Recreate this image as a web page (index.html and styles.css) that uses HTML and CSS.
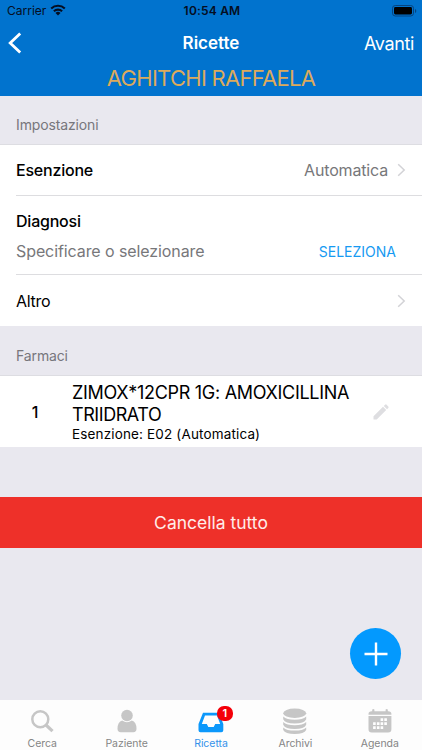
FILE: index.html
```html
<!DOCTYPE html>
<html lang="it">
<head>
<meta charset="utf-8">
<title>Ricette</title>
<link rel="stylesheet" href="styles.css">
</head>
<body>
<div class="app">
  <header class="header">
    <div class="status">
      <div class="carrier"><span>Carrier</span>
        <svg width="16" height="12" viewBox="0 0 16 12"><g fill="none" stroke="#050e22" stroke-width="2.1"><path d="M1.2 4.6a9.7 9.7 0 0 1 13.6 0"/><path d="M3.9 7.3a5.9 5.9 0 0 1 8.2 0"/></g><path d="M5.5 9a3.6 3.6 0 0 1 5 0L8 11.5z" fill="#050e22"/></svg>
      </div>
      <time class="time">10:54 AM</time>
      <svg class="battery" width="25" height="12" viewBox="0 0 25 12"><rect x=".5" y=".5" width="21" height="10.5" rx="2.8" fill="none" stroke="#06447f"/><rect x="2" y="2" width="18" height="7.5" rx="1.4" fill="#000"/><path d="M23 4v4q1.3-.6 1.3-2T23 4" fill="#06447f"/></svg>
    </div>
    <nav class="nav">
      <svg class="back" width="14" height="24" viewBox="0 0 14 24"><path d="M12.2 2.5 2.2 12l10 9.5" fill="none" stroke="#fff" stroke-width="2.8"/></svg>
      <h1 class="title">Ricette</h1>
      <span class="next">Avanti</span>
    </nav>
    <div class="patient"><span>AGHITCHI RAFFAELA</span></div>
  </header>
  <main class="content">
    <h2 class="section"><span>Impostazioni</span></h2>
    <div class="list">
      <div class="row first">
        <span class="label">Esenzione</span>
        <span class="value">Automatica</span>
        <svg class="chevron" width="9" height="14" viewBox="0 0 9 14"><path d="m1.2 1.2 6 5.8-6 5.8" fill="none" stroke="#d2d2d6" stroke-width="1.5"/></svg>
      </div>
      <div class="row diagnosis">
        <span class="label">Diagnosi</span>
        <div class="pick"><span class="hint">Specificare o selezionare</span><span class="select">SELEZIONA</span></div>
      </div>
      <div class="row last">
        <span class="altro">Altro</span>
        <svg class="chevron" width="9" height="14" viewBox="0 0 9 14"><path d="m1.2 1.2 6 5.8-6 5.8" fill="none" stroke="#d2d2d6" stroke-width="1.5"/></svg>
      </div>
    </div>
    <h2 class="section second"><span>Farmaci</span></h2>
    <div class="drug">
      <span class="number">1</span>
      <div class="drug-text">
        <div class="name"><span>ZIMOX*12CPR 1G: AMOXICILLINA</span><br><span class="name-end">TRIIDRATO</span></div>
        <div class="detail"><span>Esenzione: E02 (Automatica)</span></div>
      </div>
      <svg class="pencil" width="16" height="16" viewBox="0 0 16 16"><path d="M.5 12.3 10 2.8 13.2 6l-9.5 9.5H.5zM10.8 2l1.3-1.3q.8-.7 1.5 0l1.7 1.7q.7.7 0 1.5L14 5.2z" fill="#dedee1"/></svg>
    </div>
    <div class="cancel"><span>Cancella tutto</span></div>
    <div class="fab"><svg width="24" height="24" viewBox="0 0 24 24"><path d="M12 .5v23M.5 12h23" stroke="#fff" stroke-width="2.4"/></svg></div>
  </main>
  <footer class="tabs">
    <div class="tab"><svg width="30" height="28" viewBox="0 0 30 28"><circle cx="13.3" cy="12.3" r="8" fill="none" stroke="#c6c6c6" stroke-width="2.5"/><path d="m19 18 6.5 6.2" stroke="#c6c6c6" stroke-width="3.2"/></svg><span>Cerca</span></div>
    <div class="tab"><svg width="30" height="28" viewBox="0 0 30 28"><circle cx="15" cy="8.5" r="5.8" fill="#c6c6c6"/><path d="M10.2 13.6q4.8 3.2 9.6 0 4.7 1.5 4.7 8.2 0 3.4-3.2 3.4H8.7q-3.2 0-3.2-3.4 0-6.7 4.7-8.2" fill="#c6c6c6"/></svg><span>Paziente</span></div>
    <div class="tab active"><svg width="30" height="28" viewBox="0 0 30 28"><path d="M7 5.7h16l4.3 11.2v6.4q0 2-2 2H4.5q-2 0-2-2v-6.4zM9 8.4 5.8 17h5l1.5 3h5.4l1.5-3h5L21 8.4z" fill="#0c98fb" fill-rule="evenodd"/></svg><b class="badge">1</b><span>Ricetta</span></div>
    <div class="tab"><svg width="30" height="28" viewBox="0 0 30 28"><g fill="#c6c6c6"><ellipse cx="14.7" cy="6.3" rx="11.5" ry="4.7"/><path d="M3.2 9.5q3.5 3.3 11.5 3.3t11.5-3.3v2.7q-2 4.4-11.5 4.4T3.2 12.2zM3.2 15q3.5 3.3 11.5 3.3T26.2 15v2.7q-2 4.3-11.5 4.3T3.2 17.7zM3.2 20.4q3.5 3.2 11.5 3.2t11.5-3.2V23q-2 4-11.5 4T3.2 23z"/></g></svg><span>Archivi</span></div>
    <div class="tab"><svg width="30" height="28" viewBox="0 0 30 28"><path d="M7.2 2.5q1.2-1 2.2 0v1.7h11.2V2.5q1-1 2.2 0v1.7Q26.4 4 26.4 7v.7H3.5V7q0-3 3.7-2.8zM3.5 9h22.9v13.2q0 3.3-3.3 3.3H6.8q-3.3 0-3.3-3.3z" fill="#c6c6c6"/><path d="M15.6 11.3h2.6v2.6h-2.6zm3.7 0h2.6v2.6h-2.6zM8.1 15.3h2.6v2.6H8.1zm3.8 0h2.6v2.6h-2.6zm3.7 0h2.6v2.6h-2.6zm3.7 0h2.6v2.6h-2.6zM8.1 19.3h2.6v2.6H8.1zm3.8 0h2.6v2.6h-2.6zm3.7 0h2.6v2.6h-2.6z" fill="#fff"/></svg><span>Agenda</span></div>
  </footer>
</div>
</body>
</html>
```
FILE: styles.css
```css
* { box-sizing: border-box; }
body { margin: 0; font-family: Inter, "Liberation Sans", sans-serif; color: #000; }
svg { display: block; flex: none; }
span, time { white-space: nowrap; }
.app { width: 422px; height: 750px; display: flex; flex-direction: column; background: #e9e8ef; overflow: hidden; }

.header { height: 96px; flex: none; background: #0173ce; color: #fff; }
.status { height: 22px; display: grid; grid-template-columns: 1fr auto 1fr; align-items: center; padding: 0 5px 0 7px; color: #050e22; font-size: 12px; line-height: 22px; }
.carrier { display: flex; align-items: center; gap: 4px; }
.carrier svg { margin-top: -2px; }
.time { font-weight: 600; letter-spacing: .2px; }
.battery { justify-self: end; }
.nav { height: 42px; display: grid; grid-template-columns: 1fr auto 1fr; align-items: center; padding: 0 8px; }
.title { margin: 0; font-size: 17px; line-height: 42px; font-weight: 600; }
.next { justify-self: end; font-size: 18px; letter-spacing: -.35px; }
.patient { height: 28px; text-align: center; color: #dcaa5c; font-size: 22px; line-height: 28px; letter-spacing: -.72px; }

.content { height: 604px; flex: none; position: relative; }
.section { height: 49px; margin: 0; padding: 19px 16px 0; font-size: 14px; line-height: 20px; font-weight: 400; letter-spacing: -.13px; color: #77767c; border-bottom: 1px solid #dddde2; }
.second { height: 50px; padding-top: 20px; }
.list { background: #fff; }
.row { height: 50px; margin-left: 16px; padding-right: 16px; display: flex; align-items: center; border-bottom: 1px solid #dddde0; font-size: 16px; line-height: 22px; }
.first { height: 51px; }
.label { font-weight: 500; letter-spacing: -.22px; }
.value { margin-left: auto; margin-right: 9px; color: #77777a; letter-spacing: -.16px; }
.diagnosis { height: 79px; padding: 14px 26px 0 0; flex-direction: column; align-items: stretch; }
.pick { display: flex; justify-content: space-between; align-items: center; margin-top: 7px; color: #77777a; }
.hint { letter-spacing: -.09px; }
.select { color: #169af2; font-size: 14px; margin-top: 2px; }
.altro { letter-spacing: -.3px; }
.last { height: 51px; border: 0; }
.last .chevron { margin-left: auto; }
.drug { height: 71px; display: flex; background: #fff; }
.number { width: 72px; padding: 24px 2px 0 0; text-align: center; font-size: 16px; line-height: 24px; font-weight: 500; }
.drug-text { width: 300px; padding-top: 6px; }
.name { font-size: 18px; line-height: 22px; letter-spacing: -.3px; }
.name-end { letter-spacing: -.43px; }
.detail { font-size: 13.5px; line-height: 16px; letter-spacing: .15px; }
.pencil { margin: 28px 0 0 1px; }
.cancel { height: 51px; margin-top: 50px; background: #ee3029; color: #ffece9; text-align: center; font-size: 17.5px; line-height: 52px; }
.fab { position: absolute; right: 21px; bottom: 21px; width: 51px; height: 51px; border-radius: 50%; background: #0399fe; display: grid; place-items: center; }

.tabs { height: 50px; flex: none; display: grid; grid-template-columns: repeat(5, 1fr); background: #fdfdfd; }
.tab { position: relative; display: flex; flex-direction: column; align-items: center; padding-top: 7px; color: #858585; font-size: 10.5px; line-height: 18px; letter-spacing: -.05px; }
.active { color: #3492ea; }
.badge { position: absolute; left: 48px; top: 6px; width: 16px; height: 15px; border-radius: 7px; background: #f40009; color: #fff; text-align: center; font-size: 11px; line-height: 15px; font-weight: 600; }
```
